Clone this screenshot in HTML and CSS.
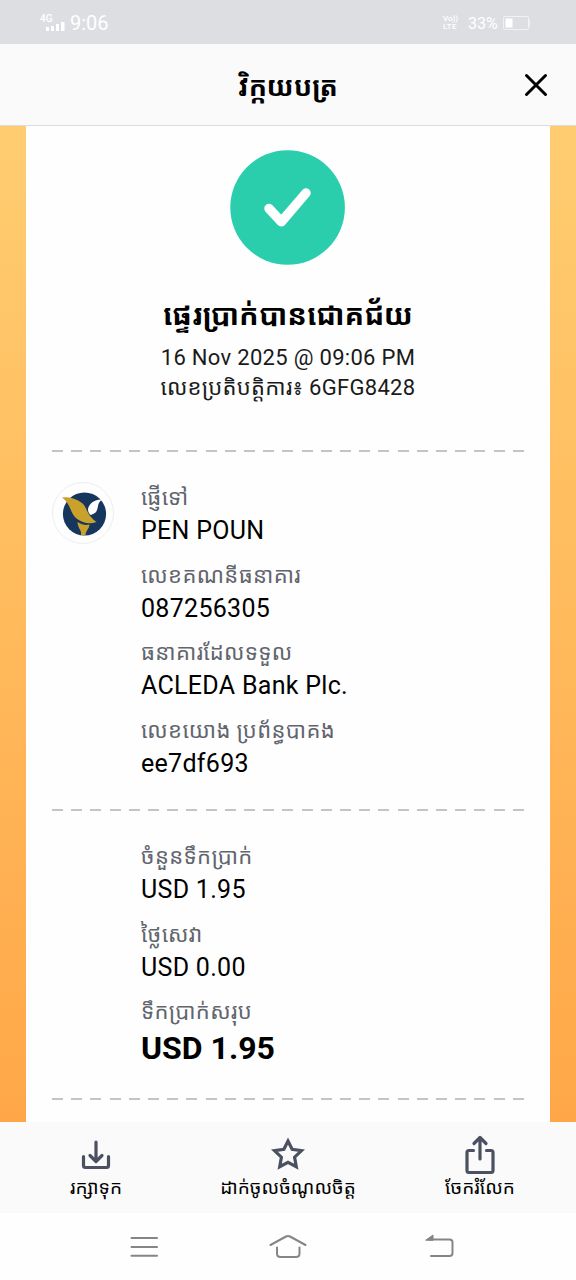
FILE: index.html
```html
<!DOCTYPE html>
<html lang="km">
  <head>
    <meta charset="UTF-8" />
    <meta name="viewport" content="width=device-width, initial-scale=1.0" />
    <title>វិក្កយបត្រ</title>
    <link rel="stylesheet" href="styles.css">
  </head>
  <body>
    <div class="status-bar">
      <div class="status-left">
        <div class="signal">
          <span class="network">4G</span>
          <svg width="19" height="9" viewBox="0 0 19 9" fill="#fff">
            <path d="M0 5h3v4H0zM5 4h3v5H5zM10 2h3v7h-3zM15 0h3.5v9H15z" />
          </svg>
        </div>
        <span class="clock">9:06</span>
      </div>
      <div class="status-right">
        <div class="volte">
          <span>Vo))</span>
          <span class="lte">LTE</span>
        </div>
        <span class="percent">33%</span>
        <svg class="battery" width="28" height="14" viewBox="0 0 28 14">
          <rect x="0.5" y="0.5" width="25" height="13" rx="1.5" fill="none" stroke="#f0f1f2" />
          <rect x="2.5" y="2.5" width="7" height="9" fill="#fff" />
          <path d="M26.5 4v6" stroke="#f0f1f2" />
        </svg>
      </div>
    </div>

    <header class="header">
      <h1 class="title">វិក្កយបត្រ</h1>
      <svg class="close" width="24" height="24" viewBox="0 0 24 24">
        <path d="M2.5 2.5l19 19M21.5 2.5l-19 19" stroke="#000" stroke-width="3" stroke-linecap="round" />
      </svg>
    </header>

    <main class="backdrop">
      <div class="receipt">
        <div class="result">
          <svg class="check" width="116" height="116" viewBox="0 0 116 116">
            <circle cx="57.6" cy="57.5" r="57.3" fill="#2bceac" />
            <path d="M39 58.5l12.3 13.3L76 43" fill="none" stroke="#fff" stroke-width="9.5" stroke-linecap="round" stroke-linejoin="round" />
          </svg>
          <h2 class="success">ផ្ទេរប្រាក់បានជោគជ័យ</h2>
          <p class="date">16 Nov 2025 @ 09:06 PM</p>
          <p class="trx">លេខប្រតិបត្តិការ៖ <span class="trx-id">6GFG8428</span></p>
        </div>

        <div class="divider"></div>

        <section class="details">
          <div class="bank-logo">
            <svg width="46" height="46" viewBox="0 0 46 46">
              <circle cx="22.5" cy="23" r="21.6" fill="#17365d" />
              <path d="M40 8.5C32 8 26 13.5 26 19c.2 2 1 3 2 4.500 1 1.300 2.500-.5 4-1 2.500-1 3.500-4 4-7.500.4-2.500 1.500-4.800 4-6.500z" fill="#fff" />
              <path d="M0 6.500C6 5.500 14 7 20 12c4.500 4 5 9.500 8.500 13.500 2 2.300 3.500 4 6 5.500-7 2.500-14 1-20-3.500C8 22.500 9.500 13.500 0 6.500z" fill="#c9a22b" />
              <path d="M15.500 31c4 2.500 8 3.500 12 2.500-.5 4.500-3.500 6-4 10.500h-4.500C20 39 15.500 37 15.500 31z" fill="#c9a22b" />
            </svg>
          </div>
          <div class="fields">
            <div class="field">
              <p class="label">ផ្ញើទៅ</p>
              <p class="value">PEN POUN</p>
            </div>
            <div class="field">
              <p class="label">លេខគណនីធនាគារ</p>
              <p class="value">087256305</p>
            </div>
            <div class="field">
              <p class="label">ធនាគារដែលទទួល</p>
              <p class="value">ACLEDA Bank Plc.</p>
            </div>
            <div class="field">
              <p class="label">លេខយោង ប្រព័ន្ធបាគង</p>
              <p class="value">ee7df693</p>
            </div>
          </div>
        </section>

        <div class="divider"></div>

        <section class="details amounts">
          <div class="fields">
            <div class="field">
              <p class="label">ចំនួនទឹកប្រាក់</p>
              <p class="value">USD 1.95</p>
            </div>
            <div class="field">
              <p class="label">ថ្លៃសេវា</p>
              <p class="value">USD 0.00</p>
            </div>
            <div class="field">
              <p class="label">ទឹកប្រាក់សរុប</p>
              <p class="value total">USD 1.95</p>
            </div>
          </div>
        </section>

        <div class="divider"></div>
      </div>
    </main>

    <footer class="actions">
      <div class="action">
        <svg width="40" height="40" viewBox="0 0 40 40">
          <path d="M20 7v19M14 20.500l6 6 6-6M7.500 21.500v9q0 2 2 2h21q2 0 2-2v-9" />
        </svg>
        <span class="action-name">រក្សាទុក</span>
      </div>
      <div class="action">
        <svg width="40" height="40" viewBox="0 0 40 40">
          <path class="star" d="M20 6l4.100 8.300 9.400 1.300-6.900 6.600 1.700 9.500L20 27.300l-8.300 4.400 1.700-9.500-6.900-6.600 9.400-1.300z" />
        </svg>
        <span class="action-name">ដាក់ចូលចំណូលចិត្ត</span>
      </div>
      <div class="action">
        <svg width="40" height="40" viewBox="0 0 40 40">
          <path d="M20 24V3M14 8.500L20 2.500l6 6M13.500 15.500H9q-2 0-2 2v18q0 2 2 2h22q2 0 2-2V17.500q0-2-2-2h-4.500" />
        </svg>
        <span class="action-name">ចែករំលែក</span>
      </div>
    </footer>

    <nav class="nav-bar">
      <svg width="38" height="28" viewBox="0 0 38 28">
        <path d="M6.500 5H32M6.500 14H32M6.500 22.700H32" />
      </svg>
      <svg width="38" height="28" viewBox="0 0 38 28">
        <path d="M1.500 12L17 3.500q2-1 4 0L36.500 12M8 14.500v6q0 3.500 3.500 3.500h15.500q3.500 0 3.500-3.500v-6" />
      </svg>
      <svg class="back" width="38" height="28" viewBox="0 0 38 28">
        <path d="M8 6.500h20.500q3 0 3 3v10.500q0 3-3 3H10" />
        <path class="arrow" d="M5 7l7-5v5z" />
      </svg>
    </nav>
  </body>
</html>
```
FILE: styles.css
```css
* {
  box-sizing: border-box;
}

body {
  margin: 0;
  width: 576px;
  height: 1280px;
  display: flex;
  flex-direction: column;
  overflow: hidden;
  font-family: Roboto, "Noto Sans Khmer", "Khmer OS", "Noto Sans", sans-serif;
  color: #000;
  background: #fefefe;
}

h1,
h2,
p {
  margin: 0;
  white-space: nowrap;
}

svg {
  display: block;
  flex-shrink: 0;
}

.status-bar {
  height: 44px;
  flex-shrink: 0;
  display: flex;
  justify-content: space-between;
  align-items: center;
  padding: 2px 45px 0 40px;
  background: #dddee2;
  color: #fff;
}

.status-left,
.status-right {
  display: flex;
  align-items: center;
}

.signal {
  display: flex;
  flex-direction: column;
  width: 30px;
  margin-top: -1px;
}

.signal svg {
  margin: -2px 0 0 6px;
}

.network {
  font-size: 10px;
  font-weight: 500;
  line-height: 10px;
}

.clock {
  font-size: 20px;
  line-height: 24px;
}

.volte {
  width: 25px;
  display: flex;
  flex-direction: column;
  font-size: 8px;
  font-weight: 500;
  line-height: 8px;
}

.lte {
  letter-spacing: 0.4px;
}

.percent {
  width: 35px;
  font-size: 16px;
}

.header {
  height: 82px;
  flex-shrink: 0;
  display: grid;
  grid-template-columns: 52px 1fr 52px;
  align-items: center;
  background: #fafafa;
  border-bottom: 1px solid #dcdce2;
}

.title {
  grid-column: 2;
  font-size: 27px;
  font-weight: 700;
  line-height: 40px;
  padding-top: 5px;
  text-align: center;
}

.backdrop {
  height: 996px;
  flex-shrink: 0;
  padding: 0 26px;
  background: linear-gradient(#ffcd70, #ffa748);
}

.receipt {
  height: 100%;
  padding: 24px 26px 0;
  overflow: hidden;
  background: #fefefe;
}

.result {
  height: 300px;
  display: flex;
  flex-direction: column;
  align-items: center;
}

.success {
  margin-top: 27px;
  font-size: 29px;
  line-height: 44px;
}

.date,
.trx {
  font-size: 22px;
  line-height: 30px;
  letter-spacing: 0.3px;
  color: #1a1a1a;
}

.date {
  margin-top: 6px;
}

.divider {
  height: 2px;
  background: repeating-linear-gradient(90deg, #c4c4c4 0 11px, transparent 11px 19.2px);
}

.details {
  height: 357px;
  display: flex;
  padding-top: 30px;
}

.bank-logo {
  width: 62px;
  height: 62px;
  margin: 0 27px 0 0;
  padding: 2px 0 0 3px;
  display: flex;
  flex-shrink: 0;
  align-items: center;
  justify-content: center;
  border: 1px solid #eeeef0;
  border-radius: 50%;
}

.fields {
  display: flex;
  flex-direction: column;
  gap: 12.7px;
}

.label {
  font-size: 22px;
  line-height: 32px;
  letter-spacing: 0.35px;
  color: #62656d;
}

.value {
  padding-top: 1px;
  font-size: 25px;
  line-height: 32px;
  letter-spacing: 0.3px;
}

.amounts {
  height: 287px;
  padding: 30px 0 0 89px;
}

.total {
  padding-top: 0;
  font-size: 32px;
  font-weight: 700;
  line-height: 40px;
  letter-spacing: 0;
}

.actions {
  height: 91px;
  flex-shrink: 0;
  display: grid;
  grid-template-columns: repeat(3, 1fr);
  padding-top: 13px;
  background: #fafafa;
}

.action {
  display: flex;
  flex-direction: column;
  align-items: center;
}

.action path {
  fill: none;
  stroke: #4b5160;
  stroke-width: 3.2;
  stroke-linecap: round;
  stroke-linejoin: round;
}

.action .star {
  stroke-linejoin: miter;
}

.action-name {
  font-size: 19px;
  line-height: 26px;
  white-space: nowrap;
}

.nav-bar {
  flex: 1;
  display: flex;
  justify-content: center;
  gap: 106px;
  padding-top: 20px;
}

.nav-bar path {
  fill: none;
  stroke: #858585;
  stroke-width: 2;
  stroke-linecap: round;
}

.nav-bar .back {
  margin: 0 -8px 0 8px;
}

.nav-bar .arrow {
  fill: #858585;
  stroke-width: 1;
}
```
